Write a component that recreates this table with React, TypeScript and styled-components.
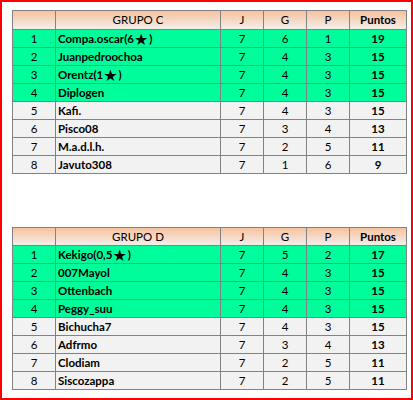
import React from "react";
import styled, { createGlobalStyle } from "styled-components";

const Global = createGlobalStyle`
  html, body { margin: 0; padding: 0; background: #ffffff; }
  body { font-family: Lato, "Open Sans", sans-serif; }
`;

const Frame = styled.div`
  box-sizing: border-box;
  width: 413px;
  height: 400px;
  border: 2px solid #ff0000;
  background: #ffffff;
  padding: 8px 0 0 10px;
  display: flex;
  flex-direction: column;
`;

const Grid = styled.div<{ $gapTop: number; $headH: number }>`
  margin-top: ${(p) => p.$gapTop}px;
  width: 395px;
  box-sizing: border-box;
  display: grid;
  grid-template-columns: 42px 164px 42px 42px 42px 56px;
  grid-template-rows: ${(p) => p.$headH}px repeat(8, 17px);
  gap: 1px;
  padding: 1px;
  background: #828282;
`;

const Cell = styled.div<{ $bg: string; $left?: boolean; $bold?: boolean }>`
  background: ${(p) => p.$bg};
  display: flex;
  align-items: center;
  justify-content: ${(p) => (p.$left ? "flex-start" : "center")};
  padding-left: ${(p) => (p.$left ? "2px" : "0")};
  font-size: 11.5px;
  font-weight: ${(p) => (p.$bold ? 700 : 400)};
  color: #000000;
  white-space: nowrap;
  line-height: 1;
`;

const HeadCell = styled(Cell)`
  background: linear-gradient(#f7c29f, #f3eeea);
`;

const Star = styled.span`
  font-family: "DejaVu Sans", sans-serif;
  font-size: 16px;
  line-height: 1;
  position: relative;
  top: 1px;
  margin-right: 1px;
`;

type Row = [string, number, number, number, number];

const GREEN = "#00fd9b";
const GRAY = "#f2f2f2";

function Name({ text }: { text: string }) {
  const i = text.indexOf("★");
  if (i < 0) return <>{text}</>;
  return (
    <>
      {text.slice(0, i)}
      <Star>★</Star>
      {text.slice(i + 1)}
    </>
  );
}

function Group({ title, rows, gapTop, headH }: { title: string; rows: Row[]; gapTop: number; headH: number }) {
  return (
    <Grid $gapTop={gapTop} $headH={headH}>
      <HeadCell $bg="" />
      <HeadCell $bg="">{title}</HeadCell>
      <HeadCell $bg="">J</HeadCell>
      <HeadCell $bg="">G</HeadCell>
      <HeadCell $bg="">P</HeadCell>
      <HeadCell $bg="" $bold>Puntos</HeadCell>
      {rows.map((r, idx) => {
        const bg = idx < 4 ? GREEN : GRAY;
        return (
          <React.Fragment key={idx}>
            <Cell $bg={bg}>{idx + 1}</Cell>
            <Cell $bg={bg} $left $bold>
              <Name text={r[0]} />
            </Cell>
            <Cell $bg={bg}>{r[1]}</Cell>
            <Cell $bg={bg}>{r[2]}</Cell>
            <Cell $bg={bg}>{r[3]}</Cell>
            <Cell $bg={bg} $bold>{r[4]}</Cell>
          </React.Fragment>
        );
      })}
    </Grid>
  );
}

const groupC: Row[] = [
  ["Compa.oscar(6★)", 7, 6, 1, 19],
  ["Juanpedroochoa", 7, 4, 3, 15],
  ["Orentz(1★)", 7, 4, 3, 15],
  ["Diplogen", 7, 4, 3, 15],
  ["Kafi.", 7, 4, 3, 15],
  ["Pisco08", 7, 3, 4, 13],
  ["M.a.d.l.h.", 7, 2, 5, 11],
  ["Javuto308", 7, 1, 6, 9],
];

const groupD: Row[] = [
  ["Kekigo(0,5★)", 7, 5, 2, 17],
  ["007Mayol", 7, 4, 3, 15],
  ["Ottenbach", 7, 4, 3, 15],
  ["Peggy_suu", 7, 4, 3, 15],
  ["Bichucha7", 7, 4, 3, 15],
  ["Adfrmo", 7, 3, 4, 13],
  ["Clodiam", 7, 2, 5, 11],
  ["Siscozappa", 7, 2, 5, 11],
];

export default function App() {
  return (
    <>
      <Global />
      <Frame>
        <Group title="GRUPO C" rows={groupC} gapTop={0} headH={18} />
        <Group title="GRUPO D" rows={groupD} gapTop={53} headH={17} />
      </Frame>
    </>
  );
}
